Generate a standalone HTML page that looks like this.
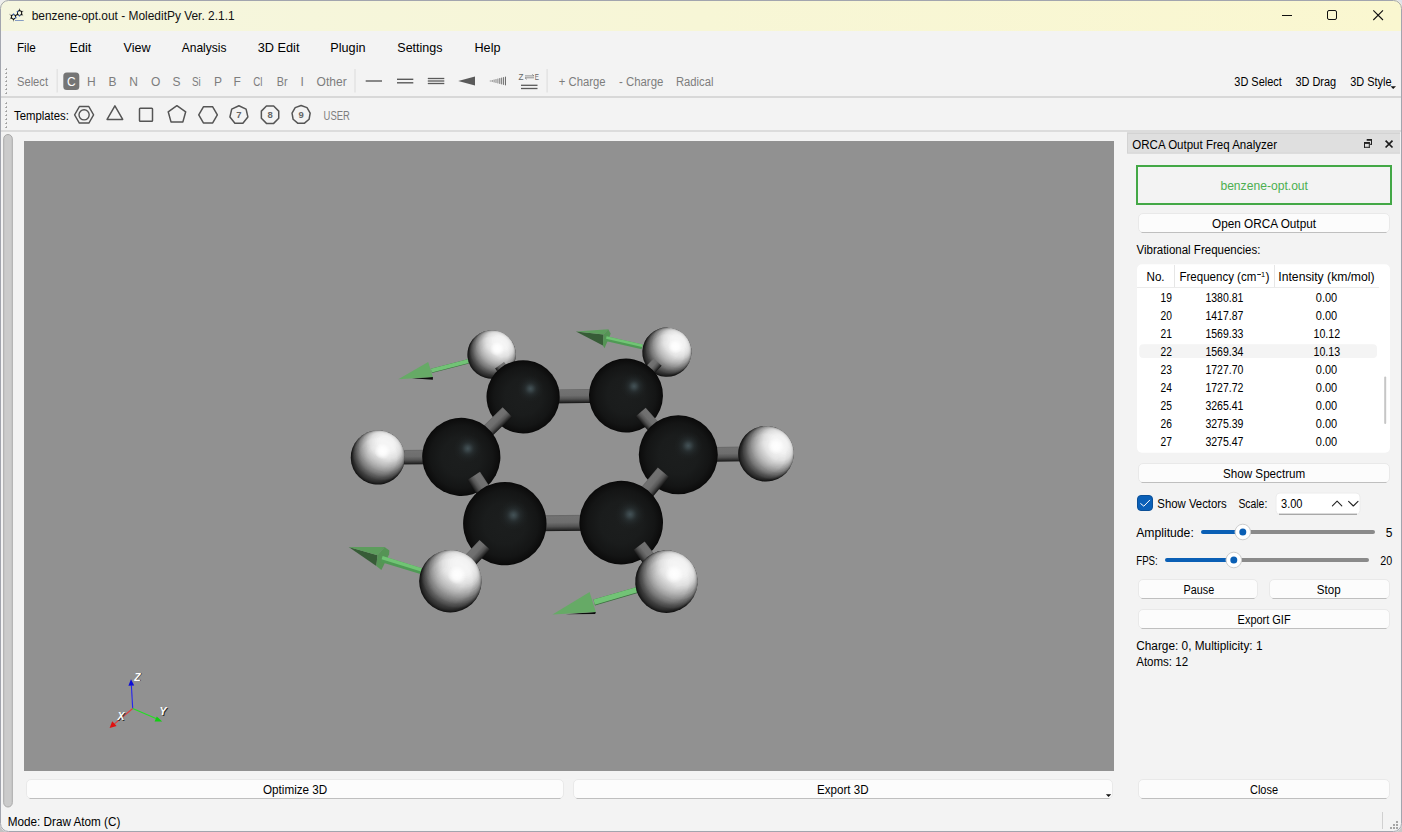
<!DOCTYPE html>
<html lang="en"><head><meta charset="utf-8"><title>benzene-opt.out - MoleditPy Ver. 2.1.1</title>
<style>html,body{margin:0;padding:0;background:#c9c9c9;overflow:hidden}svg{display:block}text{font-family:"Liberation Sans",sans-serif;white-space:pre}</style>
</head><body>
<svg width="1402" height="832" viewBox="0 0 1402 832">
<defs>
<linearGradient id="tb" x1="0" x2="1" y1="0" y2="0"><stop offset="0" stop-color="#f5f6df"/><stop offset="0.5" stop-color="#f7f6d6"/><stop offset="1" stop-color="#faf7d0"/></linearGradient>
<radialGradient id="gC" cx="0.57" cy="0.39" r="0.7"><stop offset="0" stop-color="#4d6168"/><stop offset="0.06" stop-color="#3f4e54"/><stop offset="0.15" stop-color="#2b3336"/><stop offset="0.3" stop-color="#212425"/><stop offset="0.6" stop-color="#1a1b1b"/><stop offset="0.85" stop-color="#131313"/><stop offset="1" stop-color="#0a0a0a"/></radialGradient>
<radialGradient id="gH" cx="0.59" cy="0.38" r="0.72"><stop offset="0" stop-color="#ffffff"/><stop offset="0.22" stop-color="#fdfdfd"/><stop offset="0.45" stop-color="#e2e2e2"/><stop offset="0.65" stop-color="#b4b4b4"/><stop offset="0.8" stop-color="#888888"/><stop offset="0.92" stop-color="#585858"/><stop offset="1" stop-color="#3a3a3a"/></radialGradient>
<radialGradient id="gH6" cx="0.65" cy="0.38" r="0.76"><stop offset="0" stop-color="#ffffff"/><stop offset="0.2" stop-color="#fdfdfd"/><stop offset="0.42" stop-color="#e2e2e2"/><stop offset="0.62" stop-color="#b4b4b4"/><stop offset="0.78" stop-color="#888888"/><stop offset="0.9" stop-color="#585858"/><stop offset="1" stop-color="#3a3a3a"/></radialGradient>
<clipPath id="win"><rect x="0" y="0" width="1402" height="832" rx="8"/></clipPath>
</defs>
<rect x="0" y="0" width="10" height="10" fill="#eeeeee" rx="0" />
<rect x="1392" y="0" width="10" height="10" fill="#dfe2ea" rx="0" />
<rect x="0" y="822" width="10" height="10" fill="#c2c2c2" rx="0" />
<rect x="1392" y="822" width="10" height="10" fill="#c8c8c8" rx="0" />
<g id="window" clip-path="url(#win)">
<rect x="0" y="0" width="1402" height="832" fill="#f3f3f3" rx="0" />
<g id="titlebar">
<rect x="0" y="0" width="1402" height="31" fill="url(#tb)" rx="0" />
<text x="31.70" y="20.00" font-size="12.3" fill="#111111" textLength="202.90" lengthAdjust="spacingAndGlyphs" >benzene-opt.out - MoleditPy Ver. 2.1.1</text>
<g id="appicon">
<path d="M11.55 15.57 L9.4 14.25 M11.4 17.95 L9.7 19.3 M13.5 19.3 V21.4 M19.5 10.4 V8.4 M21.6 11.6 L23.4 11.2 M21.6 14.4 L23.2 15.6" stroke="#8a8a80" stroke-width="0.8" fill="none"/>
<polygon points="11.55,15.57 13.53,14.38 15.5,15.57 15.65,17.7 13.5,19.3 11.4,17.95" fill="none" stroke="#1a1a1a" stroke-width="1"/>
<polygon points="17.5,11.6 19.5,10.4 21.6,11.6 21.6,14.4 19.5,15.6 17.5,14.4" fill="none" stroke="#1a1a1a" stroke-width="1"/>
<path d="M15.5 15.57 L17.5 14.4" stroke="#1a1a1a" stroke-width="1"/>
<circle cx="11.55" cy="15.57" r="0.85" fill="#111111"/>
<circle cx="13.53" cy="14.38" r="0.85" fill="#3560b8"/>
<circle cx="15.5" cy="15.57" r="0.85" fill="#111111"/>
<circle cx="15.65" cy="17.7" r="0.85" fill="#3560b8"/>
<circle cx="13.5" cy="19.3" r="0.85" fill="#111111"/>
<circle cx="11.4" cy="17.95" r="0.85" fill="#111111"/>
<circle cx="17.5" cy="11.6" r="0.85" fill="#3560b8"/>
<circle cx="19.5" cy="10.4" r="0.85" fill="#111111"/>
<circle cx="21.6" cy="11.6" r="0.85" fill="#111111"/>
<circle cx="21.6" cy="14.4" r="0.85" fill="#111111"/>
<circle cx="19.5" cy="15.6" r="0.85" fill="#3560b8"/>
<circle cx="17.5" cy="14.4" r="0.85" fill="#111111"/>
<path d="M15.2 20.5 H23.8" stroke="#5a78b8" stroke-width="0.9" stroke-dasharray="1.6 0.4"/>
</g>
<line x1="1282" y1="15.5" x2="1292" y2="15.5" stroke="#111" stroke-width="1" />
<rect x="1327.5" y="10.5" width="9" height="9" rx="1.5" fill="none" stroke="#111" stroke-width="1"/>
<path d="M1373.3 10.3 L1383 20 M1383 10.3 L1373.3 20" stroke="#111" stroke-width="1.1" fill="none"/>
</g>
<g id="menubar">
<text x="17.00" y="51.50" font-size="13" fill="#000" textLength="18.80" lengthAdjust="spacingAndGlyphs" >File</text>
<text x="69.50" y="51.50" font-size="13" fill="#000" textLength="21.80" lengthAdjust="spacingAndGlyphs" >Edit</text>
<text x="123.50" y="51.50" font-size="13" fill="#000" textLength="27.00" lengthAdjust="spacingAndGlyphs" >View</text>
<text x="181.70" y="51.50" font-size="13" fill="#000" textLength="44.80" lengthAdjust="spacingAndGlyphs" >Analysis</text>
<text x="257.70" y="51.50" font-size="13" fill="#000" textLength="41.80" lengthAdjust="spacingAndGlyphs" >3D Edit</text>
<text x="330.30" y="51.50" font-size="13" fill="#000" textLength="35.20" lengthAdjust="spacingAndGlyphs" >Plugin</text>
<text x="397.30" y="51.50" font-size="13" fill="#000" textLength="45.20" lengthAdjust="spacingAndGlyphs" >Settings</text>
<text x="474.50" y="51.50" font-size="13" fill="#000" textLength="26.00" lengthAdjust="spacingAndGlyphs" >Help</text>
</g>
<g id="toolbar-main">
<rect x="5" y="68" width="2" height="2" fill="#b4b4b4" rx="0" />
<rect x="5" y="68" width="1" height="1" fill="#fcfcfc" rx="0" />
<rect x="6" y="69" width="1" height="1" fill="#9c9c9c" rx="0" />
<rect x="5" y="72" width="2" height="2" fill="#b4b4b4" rx="0" />
<rect x="5" y="72" width="1" height="1" fill="#fcfcfc" rx="0" />
<rect x="6" y="73" width="1" height="1" fill="#9c9c9c" rx="0" />
<rect x="5" y="76" width="2" height="2" fill="#b4b4b4" rx="0" />
<rect x="5" y="76" width="1" height="1" fill="#fcfcfc" rx="0" />
<rect x="6" y="77" width="1" height="1" fill="#9c9c9c" rx="0" />
<rect x="5" y="80" width="2" height="2" fill="#b4b4b4" rx="0" />
<rect x="5" y="80" width="1" height="1" fill="#fcfcfc" rx="0" />
<rect x="6" y="81" width="1" height="1" fill="#9c9c9c" rx="0" />
<rect x="5" y="84" width="2" height="2" fill="#b4b4b4" rx="0" />
<rect x="5" y="84" width="1" height="1" fill="#fcfcfc" rx="0" />
<rect x="6" y="85" width="1" height="1" fill="#9c9c9c" rx="0" />
<rect x="5" y="88" width="2" height="2" fill="#b4b4b4" rx="0" />
<rect x="5" y="88" width="1" height="1" fill="#fcfcfc" rx="0" />
<rect x="6" y="89" width="1" height="1" fill="#9c9c9c" rx="0" />
<rect x="5" y="92" width="2" height="2" fill="#b4b4b4" rx="0" />
<rect x="5" y="92" width="1" height="1" fill="#fcfcfc" rx="0" />
<rect x="6" y="93" width="1" height="1" fill="#9c9c9c" rx="0" />
<text x="17.00" y="85.70" font-size="12" fill="#7d7d7d" textLength="31.00" lengthAdjust="spacingAndGlyphs" >Select</text>
<line x1="57.2" y1="69" x2="57.2" y2="92.5" stroke="#e3e3e3" stroke-width="1.5" />
<rect x="63.3" y="72.5" width="16" height="17.5" fill="#757575" rx="3.5" />
<text x="71.35" y="85.70" font-size="12" fill="#ffffff" text-anchor="middle" >C</text>
<text x="91.30" y="85.70" font-size="12" fill="#7d7d7d" text-anchor="middle" >H</text>
<text x="112.55" y="85.70" font-size="12" fill="#7d7d7d" text-anchor="middle" >B</text>
<text x="133.65" y="85.70" font-size="12" fill="#7d7d7d" text-anchor="middle" >N</text>
<text x="155.75" y="85.70" font-size="12" fill="#7d7d7d" text-anchor="middle" >O</text>
<text x="176.40" y="85.70" font-size="12" fill="#7d7d7d" text-anchor="middle" >S</text>
<text x="192.00" y="85.70" font-size="12" fill="#7d7d7d" textLength="8.80" lengthAdjust="spacingAndGlyphs" >Si</text>
<text x="217.90" y="85.70" font-size="12" fill="#7d7d7d" text-anchor="middle" >P</text>
<text x="237.05" y="85.70" font-size="12" fill="#7d7d7d" text-anchor="middle" >F</text>
<text x="253.20" y="85.70" font-size="12" fill="#7d7d7d" textLength="9.30" lengthAdjust="spacingAndGlyphs" >Cl</text>
<text x="276.70" y="85.70" font-size="12" fill="#7d7d7d" textLength="10.80" lengthAdjust="spacingAndGlyphs" >Br</text>
<text x="302.15" y="85.70" font-size="12" fill="#7d7d7d" text-anchor="middle" >I</text>
<text x="316.60" y="85.70" font-size="12" fill="#7d7d7d" textLength="30.10" lengthAdjust="spacingAndGlyphs" >Other</text>
<line x1="355" y1="69" x2="355" y2="92.5" stroke="#e3e3e3" stroke-width="1.5" />
<line x1="365.7" y1="81" x2="382" y2="81" stroke="#5a5a5a" stroke-width="1.4" />
<line x1="397" y1="79.3" x2="413.3" y2="79.3" stroke="#5a5a5a" stroke-width="1.4" />
<line x1="397" y1="82.8" x2="413.3" y2="82.8" stroke="#5a5a5a" stroke-width="1.4" />
<line x1="427.8" y1="78.5" x2="444.3" y2="78.5" stroke="#5a5a5a" stroke-width="1.3" />
<line x1="427.8" y1="81" x2="444.3" y2="81" stroke="#5a5a5a" stroke-width="1.3" />
<line x1="427.8" y1="83.5" x2="444.3" y2="83.5" stroke="#5a5a5a" stroke-width="1.3" />
<polygon points="458.2,81 475,76.5 475,85.5" fill="#5a5a5a"/>
<line x1="490.30" y1="80.50" x2="490.30" y2="81.50" stroke="#848484" stroke-width="1" />
<line x1="492.20" y1="80.02" x2="492.20" y2="81.98" stroke="#848484" stroke-width="1" />
<line x1="494.10" y1="79.54" x2="494.10" y2="82.46" stroke="#848484" stroke-width="1" />
<line x1="496.00" y1="79.06" x2="496.00" y2="82.94" stroke="#848484" stroke-width="1" />
<line x1="497.90" y1="78.58" x2="497.90" y2="83.42" stroke="#848484" stroke-width="1" />
<line x1="499.80" y1="78.10" x2="499.80" y2="83.90" stroke="#6e6e6e" stroke-width="1" />
<line x1="501.70" y1="77.62" x2="501.70" y2="84.38" stroke="#6e6e6e" stroke-width="1" />
<line x1="503.60" y1="77.14" x2="503.60" y2="84.86" stroke="#6e6e6e" stroke-width="1" />
<line x1="505.50" y1="76.66" x2="505.50" y2="85.34" stroke="#6e6e6e" stroke-width="1" />
<text x="518.5" y="79.9" font-size="9.5" fill="#666666" textLength="5" lengthAdjust="spacingAndGlyphs">Z</text>
<text x="534.8" y="79.9" font-size="9.5" fill="#666666" textLength="4.2" lengthAdjust="spacingAndGlyphs">E</text>
<path d="M525 75.9 H534 M532.2 74.4 L534 75.9 M525 77.8 H534 M526.8 79.3 L525 77.8" stroke="#777777" stroke-width="0.8" fill="none"/>
<line x1="521" y1="85.3" x2="537.5" y2="85.3" stroke="#5a5a5a" stroke-width="1.3" />
<line x1="521" y1="88.5" x2="537.5" y2="88.5" stroke="#5a5a5a" stroke-width="1.3" />
<line x1="547.1" y1="69" x2="547.1" y2="92.5" stroke="#e3e3e3" stroke-width="1.5" />
<text x="558.80" y="85.70" font-size="12" fill="#7d7d7d" textLength="46.70" lengthAdjust="spacingAndGlyphs" >+ Charge</text>
<text x="619.00" y="85.70" font-size="12" fill="#7d7d7d" textLength="44.30" lengthAdjust="spacingAndGlyphs" >- Charge</text>
<text x="676.00" y="85.70" font-size="12" fill="#7d7d7d" textLength="37.50" lengthAdjust="spacingAndGlyphs" >Radical</text>
<text x="1234.30" y="85.70" font-size="12" fill="#000" textLength="47.50" lengthAdjust="spacingAndGlyphs" >3D Select</text>
<text x="1295.40" y="85.70" font-size="12" fill="#000" textLength="40.80" lengthAdjust="spacingAndGlyphs" >3D Drag</text>
<text x="1350.30" y="85.70" font-size="12" fill="#000" textLength="41.30" lengthAdjust="spacingAndGlyphs" >3D Style</text>
<polygon points="1390.5,86.3 1396,86.3 1393.2,88.9" fill="#111"/>
<rect x="0" y="96" width="1402" height="2" fill="#d8d8d8" rx="0" />
</g>
<g id="toolbar-templates">
<rect x="5" y="102" width="2" height="2" fill="#b4b4b4" rx="0" />
<rect x="5" y="102" width="1" height="1" fill="#fcfcfc" rx="0" />
<rect x="6" y="103" width="1" height="1" fill="#9c9c9c" rx="0" />
<rect x="5" y="106" width="2" height="2" fill="#b4b4b4" rx="0" />
<rect x="5" y="106" width="1" height="1" fill="#fcfcfc" rx="0" />
<rect x="6" y="107" width="1" height="1" fill="#9c9c9c" rx="0" />
<rect x="5" y="110" width="2" height="2" fill="#b4b4b4" rx="0" />
<rect x="5" y="110" width="1" height="1" fill="#fcfcfc" rx="0" />
<rect x="6" y="111" width="1" height="1" fill="#9c9c9c" rx="0" />
<rect x="5" y="114" width="2" height="2" fill="#b4b4b4" rx="0" />
<rect x="5" y="114" width="1" height="1" fill="#fcfcfc" rx="0" />
<rect x="6" y="115" width="1" height="1" fill="#9c9c9c" rx="0" />
<rect x="5" y="118" width="2" height="2" fill="#b4b4b4" rx="0" />
<rect x="5" y="118" width="1" height="1" fill="#fcfcfc" rx="0" />
<rect x="6" y="119" width="1" height="1" fill="#9c9c9c" rx="0" />
<rect x="5" y="122" width="2" height="2" fill="#b4b4b4" rx="0" />
<rect x="5" y="122" width="1" height="1" fill="#fcfcfc" rx="0" />
<rect x="6" y="123" width="1" height="1" fill="#9c9c9c" rx="0" />
<rect x="5" y="126" width="2" height="2" fill="#b4b4b4" rx="0" />
<rect x="5" y="126" width="1" height="1" fill="#fcfcfc" rx="0" />
<rect x="6" y="127" width="1" height="1" fill="#9c9c9c" rx="0" />
<text x="14.00" y="119.80" font-size="12" fill="#000" textLength="54.80" lengthAdjust="spacingAndGlyphs" >Templates:</text>
<polygon points="93.60,114.80 88.85,123.03 79.35,123.03 74.60,114.80 79.35,106.57 88.85,106.57" fill="none" stroke="#555555" stroke-width="1.4" stroke-linejoin="round"/>
<circle cx="84.1" cy="114.8" r="5.1" fill="none" stroke="#555555" stroke-width="1.4"/>
<polygon points="114.9,105.9 122.7,119.4 107.1,119.4" fill="none" stroke="#555555" stroke-width="1.5" stroke-linejoin="round"/>
<rect x="139.5" y="108.3" width="13" height="13" rx="0.8" fill="none" stroke="#555555" stroke-width="1.5"/>
<polygon points="176.9,105.7 185.7,111.8 182.9,121.9 171,121.9 168.2,111.8" fill="none" stroke="#555555" stroke-width="1.5" stroke-linejoin="round"/>
<polygon points="217.35,114.90 212.70,122.95 203.40,122.95 198.75,114.90 203.40,106.85 212.70,106.85" fill="none" stroke="#555555" stroke-width="1.5" stroke-linejoin="round"/>
<polygon points="238.90,105.70 246.09,109.16 247.87,116.95 242.89,123.19 234.91,123.19 229.93,116.95 231.71,109.16" fill="none" stroke="#555555" stroke-width="1.5" stroke-linejoin="round"/>
<polygon points="278.73,118.30 273.65,123.38 266.45,123.38 261.37,118.30 261.37,111.10 266.45,106.02 273.65,106.02 278.73,111.10" fill="none" stroke="#555555" stroke-width="1.5" stroke-linejoin="round"/>
<polygon points="301.10,105.50 307.01,107.65 310.16,113.10 309.07,119.30 304.25,123.35 297.95,123.35 293.13,119.30 292.04,113.10 295.19,107.65" fill="none" stroke="#555555" stroke-width="1.5" stroke-linejoin="round"/>
<text x="238.90" y="118.20" font-size="9.5" fill="#666" text-anchor="middle" font-weight="bold">7</text>
<text x="270.05" y="118.20" font-size="9.5" fill="#666" text-anchor="middle" font-weight="bold">8</text>
<text x="301.10" y="118.20" font-size="9.5" fill="#666" text-anchor="middle" font-weight="bold">9</text>
<text x="323.60" y="119.60" font-size="12" fill="#7d7d7d" textLength="26.20" lengthAdjust="spacingAndGlyphs" >USER</text>
<rect x="0" y="130" width="1402" height="2" fill="#dcdcdc" rx="0" />
</g>
<rect x="3.7" y="134.5" width="8.6" height="672.5" rx="4.3" fill="#cbcbcb" stroke="#a9a9a9" stroke-width="1"/>
<g id="viewport">
<rect x="24" y="141" width="1090" height="630" fill="#919191" rx="0" />
</g>
<rect x="26.5" y="779.5" width="537" height="19" rx="4.5" fill="#fcfcfc" stroke="#e9e9e9" stroke-width="1"/>
<path d="M29.5 798.5 H560.5" stroke="#bfbfbf" stroke-width="1" fill="none"/>
<text x="263.00" y="793.80" font-size="12" fill="#000" textLength="64.30" lengthAdjust="spacingAndGlyphs" >Optimize 3D</text>
<rect x="573.5" y="779.5" width="539" height="19" rx="4.5" fill="#fcfcfc" stroke="#e9e9e9" stroke-width="1"/>
<path d="M576.5 798.5 H1109.5" stroke="#bfbfbf" stroke-width="1" fill="none"/>
<text x="817.00" y="793.80" font-size="12" fill="#000" textLength="51.50" lengthAdjust="spacingAndGlyphs" >Export 3D</text>
<polygon points="1105.9,794.2 1111.2,794.2 1108.55,797" fill="#111"/>
<text x="7.70" y="825.60" font-size="12" fill="#000" textLength="112.70" lengthAdjust="spacingAndGlyphs" >Mode: Draw Atom (C)</text>
<line x1="1382.5" y1="812" x2="1382.5" y2="829" stroke="#d0d0d0" stroke-width="1" />
<rect x="1396" y="821" width="2" height="2" fill="#a6a6a6" rx="0" />
<rect x="1393" y="824" width="2" height="2" fill="#a6a6a6" rx="0" />
<rect x="1396" y="824" width="2" height="2" fill="#a6a6a6" rx="0" />
<rect x="1390" y="827" width="2" height="2" fill="#a6a6a6" rx="0" />
<rect x="1393" y="827" width="2" height="2" fill="#a6a6a6" rx="0" />
<rect x="1396" y="827" width="2" height="2" fill="#a6a6a6" rx="0" />
<g id="dock">
<rect x="1127" y="132" width="273" height="1" fill="#dcdcdc" rx="0" />
<rect x="1127" y="133" width="273" height="20.7" fill="#d3d3d3" rx="0" />
<rect x="1128" y="134" width="272" height="18.7" fill="#dfdfdf" rx="0" />
<text x="1132.30" y="148.90" font-size="12" fill="#000" textLength="144.70" lengthAdjust="spacingAndGlyphs" >ORCA Output Freq Analyzer</text>
<g fill="#222222"><rect x="1366.7" y="139" width="5.3" height="1.8"/><rect x="1371" y="139" width="1" height="5.8"/><rect x="1369.8" y="143.8" width="2.2" height="1"/><rect x="1364" y="142" width="5.8" height="1.9"/><rect x="1364" y="142" width="1" height="5.8"/><rect x="1368.8" y="142" width="1" height="5.8"/><rect x="1364" y="146.8" width="5.8" height="1"/></g>
<path d="M1385.6 140.6 L1392.5 147.5 M1392.5 140.6 L1385.6 147.5" stroke="#1c1c1c" stroke-width="1.7" fill="none"/>
<rect x="1137" y="166" width="254" height="38" fill="#f3f3f3" stroke="#43a846" stroke-width="2"/>
<text x="1220.40" y="190.00" font-size="12" fill="#4caf50" textLength="87.60" lengthAdjust="spacingAndGlyphs" >benzene-opt.out</text>
<rect x="1138.5" y="213.5" width="251" height="19" rx="4.5" fill="#fcfcfc" stroke="#e9e9e9" stroke-width="1"/>
<path d="M1141.5 232.5 H1386.5" stroke="#bfbfbf" stroke-width="1" fill="none"/>
<text x="1212.00" y="228.00" font-size="12" fill="#000" textLength="104.00" lengthAdjust="spacingAndGlyphs" >Open ORCA Output</text>
<text x="1136.50" y="254.00" font-size="12" fill="#000" textLength="123.90" lengthAdjust="spacingAndGlyphs" >Vibrational Frequencies:</text>
<rect x="1137" y="264.3" width="253" height="188.5" fill="#ffffff" rx="5" />
<text x="1146.50" y="281.00" font-size="12" fill="#000" textLength="18.10" lengthAdjust="spacingAndGlyphs" >No.</text>
<text x="1179.50" y="281.00" font-size="12" fill="#000" textLength="76.80" lengthAdjust="spacingAndGlyphs" >Frequency (cm</text>
<line x1="1257.2" y1="274.5" x2="1260.9" y2="274.5" stroke="#1a1a1a" stroke-width="1"/>
<text x="1263.1" y="276.9" font-size="7.4" fill="#000" text-anchor="middle">1</text>
<text x="1267.40" y="281.00" font-size="12" fill="#000" text-anchor="middle" >)</text>
<text x="1278.30" y="281.00" font-size="12" fill="#000" textLength="96.20" lengthAdjust="spacingAndGlyphs" >Intensity (km/mol)</text>
<line x1="1174.5" y1="265" x2="1174.5" y2="287" stroke="#e6e6e6" stroke-width="1"/>
<line x1="1274.5" y1="265" x2="1274.5" y2="287" stroke="#e6e6e6" stroke-width="1"/>
<line x1="1137" y1="287.5" x2="1379" y2="287.5" stroke="#ebebeb" stroke-width="1"/>
<rect x="1139.3" y="344.2" width="237.7" height="13.7" fill="#f4f4f4" rx="4" />
<text x="1160.60" y="301.80" font-size="12" fill="#000" textLength="11.40" lengthAdjust="spacingAndGlyphs" >19</text>
<text x="1205.40" y="301.80" font-size="12" fill="#000" textLength="38.00" lengthAdjust="spacingAndGlyphs" >1380.81</text>
<text x="1315.80" y="301.80" font-size="12" fill="#000" textLength="21.40" lengthAdjust="spacingAndGlyphs" >0.00</text>
<text x="1160.60" y="319.80" font-size="12" fill="#000" textLength="11.40" lengthAdjust="spacingAndGlyphs" >20</text>
<text x="1205.40" y="319.80" font-size="12" fill="#000" textLength="38.00" lengthAdjust="spacingAndGlyphs" >1417.87</text>
<text x="1315.80" y="319.80" font-size="12" fill="#000" textLength="21.40" lengthAdjust="spacingAndGlyphs" >0.00</text>
<text x="1160.60" y="337.80" font-size="12" fill="#000" textLength="11.40" lengthAdjust="spacingAndGlyphs" >21</text>
<text x="1205.40" y="337.80" font-size="12" fill="#000" textLength="38.00" lengthAdjust="spacingAndGlyphs" >1569.33</text>
<text x="1313.50" y="337.80" font-size="12" fill="#000" textLength="26.70" lengthAdjust="spacingAndGlyphs" >10.12</text>
<text x="1160.60" y="355.80" font-size="12" fill="#000" textLength="11.40" lengthAdjust="spacingAndGlyphs" >22</text>
<text x="1205.40" y="355.80" font-size="12" fill="#000" textLength="38.00" lengthAdjust="spacingAndGlyphs" >1569.34</text>
<text x="1313.50" y="355.80" font-size="12" fill="#000" textLength="26.70" lengthAdjust="spacingAndGlyphs" >10.13</text>
<text x="1160.60" y="373.80" font-size="12" fill="#000" textLength="11.40" lengthAdjust="spacingAndGlyphs" >23</text>
<text x="1205.40" y="373.80" font-size="12" fill="#000" textLength="38.00" lengthAdjust="spacingAndGlyphs" >1727.70</text>
<text x="1315.80" y="373.80" font-size="12" fill="#000" textLength="21.40" lengthAdjust="spacingAndGlyphs" >0.00</text>
<text x="1160.60" y="391.80" font-size="12" fill="#000" textLength="11.40" lengthAdjust="spacingAndGlyphs" >24</text>
<text x="1205.40" y="391.80" font-size="12" fill="#000" textLength="38.00" lengthAdjust="spacingAndGlyphs" >1727.72</text>
<text x="1315.80" y="391.80" font-size="12" fill="#000" textLength="21.40" lengthAdjust="spacingAndGlyphs" >0.00</text>
<text x="1160.60" y="409.80" font-size="12" fill="#000" textLength="11.40" lengthAdjust="spacingAndGlyphs" >25</text>
<text x="1205.40" y="409.80" font-size="12" fill="#000" textLength="38.00" lengthAdjust="spacingAndGlyphs" >3265.41</text>
<text x="1315.80" y="409.80" font-size="12" fill="#000" textLength="21.40" lengthAdjust="spacingAndGlyphs" >0.00</text>
<text x="1160.60" y="427.80" font-size="12" fill="#000" textLength="11.40" lengthAdjust="spacingAndGlyphs" >26</text>
<text x="1205.40" y="427.80" font-size="12" fill="#000" textLength="38.00" lengthAdjust="spacingAndGlyphs" >3275.39</text>
<text x="1315.80" y="427.80" font-size="12" fill="#000" textLength="21.40" lengthAdjust="spacingAndGlyphs" >0.00</text>
<text x="1160.60" y="445.80" font-size="12" fill="#000" textLength="11.40" lengthAdjust="spacingAndGlyphs" >27</text>
<text x="1205.40" y="445.80" font-size="12" fill="#000" textLength="38.00" lengthAdjust="spacingAndGlyphs" >3275.47</text>
<text x="1315.80" y="445.80" font-size="12" fill="#000" textLength="21.40" lengthAdjust="spacingAndGlyphs" >0.00</text>
<rect x="1384.2" y="376.5" width="2" height="47.5" fill="#c6c6c6" rx="1" />
<rect x="1138.5" y="463.5" width="251" height="19" rx="4.5" fill="#fcfcfc" stroke="#e9e9e9" stroke-width="1"/>
<path d="M1141.5 482.5 H1386.5" stroke="#bfbfbf" stroke-width="1" fill="none"/>
<text x="1223.00" y="478.00" font-size="12" fill="#000" textLength="82.20" lengthAdjust="spacingAndGlyphs" >Show Spectrum</text>
<rect x="1137.5" y="495.5" width="15" height="15" rx="3.5" fill="#0a60b8" stroke="#0b4f97" stroke-width="1"/>
<path d="M1140.7 503.6 L1143.8 506.2 L1149.7 500.2" stroke="#ffffff" stroke-width="1" fill="none" stroke-linecap="round" stroke-linejoin="round"/>
<text x="1157.30" y="508.00" font-size="12" fill="#000" textLength="69.50" lengthAdjust="spacingAndGlyphs" >Show Vectors</text>
<text x="1238.40" y="508.00" font-size="12" fill="#000" textLength="28.90" lengthAdjust="spacingAndGlyphs" >Scale:</text>
<rect x="1276" y="493" width="84" height="21.5" rx="4" fill="#ffffff" stroke="#ececec" stroke-width="1"/>
<line x1="1279" y1="514.2" x2="1357" y2="514.2" stroke="#8a8a8a" stroke-width="1"/>
<text x="1281.00" y="508.00" font-size="12" fill="#000" textLength="21.50" lengthAdjust="spacingAndGlyphs" >3.00</text>
<path d="M1332.4 505.8 L1337.1 501.2 L1341.8 505.8 M1348.6 501.4 L1353.3 506 L1358 501.4" stroke="#222" stroke-width="1.1" fill="none" stroke-linecap="round" stroke-linejoin="round"/>
<text x="1136.20" y="537.00" font-size="12" fill="#000" textLength="57.60" lengthAdjust="spacingAndGlyphs" >Amplitude:</text>
<line x1="1203" y1="532" x2="1242" y2="532" stroke="#0a5fb5" stroke-width="4" stroke-linecap="round"/>
<line x1="1250" y1="532" x2="1373" y2="532" stroke="#8a8a8a" stroke-width="4" stroke-linecap="round"/>
<circle cx="1242.8" cy="532" r="7.8" fill="#ffffff" stroke="#cdcdcd" stroke-width="1"/><circle cx="1242.8" cy="532" r="3.5" fill="#0a5fb5"/>
<text x="1389.05" y="537.00" font-size="12" fill="#000" text-anchor="middle" >5</text>
<text x="1136.20" y="565.00" font-size="12" fill="#000" textLength="21.60" lengthAdjust="spacingAndGlyphs" >FPS:</text>
<line x1="1167" y1="560" x2="1233" y2="560" stroke="#0a5fb5" stroke-width="4" stroke-linecap="round"/>
<line x1="1241" y1="560" x2="1367" y2="560" stroke="#8a8a8a" stroke-width="4" stroke-linecap="round"/>
<circle cx="1233.8" cy="560" r="7.8" fill="#ffffff" stroke="#cdcdcd" stroke-width="1"/><circle cx="1233.8" cy="560" r="3.5" fill="#0a5fb5"/>
<text x="1380.30" y="565.00" font-size="12" fill="#000" textLength="11.90" lengthAdjust="spacingAndGlyphs" >20</text>
<rect x="1138.5" y="579.5" width="119" height="19" rx="4.5" fill="#fcfcfc" stroke="#e9e9e9" stroke-width="1"/>
<path d="M1141.5 598.5 H1254.5" stroke="#bfbfbf" stroke-width="1" fill="none"/>
<text x="1183.60" y="593.90" font-size="12" fill="#000" textLength="30.60" lengthAdjust="spacingAndGlyphs" >Pause</text>
<rect x="1269.5" y="579.5" width="120" height="19" rx="4.5" fill="#fcfcfc" stroke="#e9e9e9" stroke-width="1"/>
<path d="M1272.5 598.5 H1386.5" stroke="#bfbfbf" stroke-width="1" fill="none"/>
<text x="1316.80" y="593.90" font-size="12" fill="#000" textLength="23.80" lengthAdjust="spacingAndGlyphs" >Stop</text>
<rect x="1138.5" y="609.5" width="251" height="19" rx="4.5" fill="#fcfcfc" stroke="#e9e9e9" stroke-width="1"/>
<path d="M1141.5 628.5 H1386.5" stroke="#bfbfbf" stroke-width="1" fill="none"/>
<text x="1237.60" y="623.90" font-size="12" fill="#000" textLength="53.00" lengthAdjust="spacingAndGlyphs" >Export GIF</text>
<text x="1136.20" y="649.90" font-size="12" fill="#000" textLength="126.30" lengthAdjust="spacingAndGlyphs" >Charge: 0, Multiplicity: 1</text>
<text x="1136.20" y="666.00" font-size="12" fill="#000" textLength="51.90" lengthAdjust="spacingAndGlyphs" >Atoms: 12</text>
<rect x="1138.5" y="779.5" width="251" height="19" rx="4.5" fill="#fcfcfc" stroke="#e9e9e9" stroke-width="1"/>
<path d="M1141.5 798.5 H1386.5" stroke="#bfbfbf" stroke-width="1" fill="none"/>
<text x="1250.00" y="793.80" font-size="12" fill="#000" textLength="28.00" lengthAdjust="spacingAndGlyphs" >Close</text>
</g>
<defs><linearGradient id="b1" gradientUnits="userSpaceOnUse" x1="515.7" y1="377.7" x2="506.9" y2="384.3"><stop offset="0" stop-color="#666666"/><stop offset="0.1" stop-color="#727272"/><stop offset="0.45" stop-color="#6e6e6e"/><stop offset="0.7" stop-color="#545454"/><stop offset="0.88" stop-color="#303030"/><stop offset="1" stop-color="#141414"/></linearGradient>
<linearGradient id="b2" gradientUnits="userSpaceOnUse" x1="637.8" y1="375.0" x2="645.8" y2="382.5"><stop offset="0" stop-color="#666666"/><stop offset="0.1" stop-color="#727272"/><stop offset="0.45" stop-color="#6e6e6e"/><stop offset="0.7" stop-color="#545454"/><stop offset="0.88" stop-color="#303030"/><stop offset="1" stop-color="#141414"/></linearGradient>
<linearGradient id="b3" gradientUnits="userSpaceOnUse" x1="587.3" y1="389.0" x2="587.4" y2="403.0"><stop offset="0" stop-color="#666666"/><stop offset="0.1" stop-color="#727272"/><stop offset="0.45" stop-color="#6e6e6e"/><stop offset="0.7" stop-color="#545454"/><stop offset="0.88" stop-color="#303030"/><stop offset="1" stop-color="#141414"/></linearGradient>
<linearGradient id="b4" gradientUnits="userSpaceOnUse" x1="479.6" y1="429.6" x2="489.0" y2="439.3"><stop offset="0" stop-color="#666666"/><stop offset="0.1" stop-color="#727272"/><stop offset="0.45" stop-color="#6e6e6e"/><stop offset="0.7" stop-color="#545454"/><stop offset="0.88" stop-color="#303030"/><stop offset="1" stop-color="#141414"/></linearGradient>
<linearGradient id="b5" gradientUnits="userSpaceOnUse" x1="664.6" y1="429.0" x2="654.4" y2="437.9"><stop offset="0" stop-color="#666666"/><stop offset="0.1" stop-color="#727272"/><stop offset="0.45" stop-color="#6e6e6e"/><stop offset="0.7" stop-color="#545454"/><stop offset="0.88" stop-color="#303030"/><stop offset="1" stop-color="#141414"/></linearGradient>
<linearGradient id="b6" gradientUnits="userSpaceOnUse" x1="429.0" y1="449.8" x2="429.1" y2="464.3"><stop offset="0" stop-color="#666666"/><stop offset="0.1" stop-color="#727272"/><stop offset="0.45" stop-color="#6e6e6e"/><stop offset="0.7" stop-color="#545454"/><stop offset="0.88" stop-color="#303030"/><stop offset="1" stop-color="#141414"/></linearGradient>
<linearGradient id="b7" gradientUnits="userSpaceOnUse" x1="712.3" y1="447.0" x2="712.5" y2="461.8"><stop offset="0" stop-color="#666666"/><stop offset="0.1" stop-color="#727272"/><stop offset="0.45" stop-color="#6e6e6e"/><stop offset="0.7" stop-color="#545454"/><stop offset="0.88" stop-color="#303030"/><stop offset="1" stop-color="#141414"/></linearGradient>
<linearGradient id="b8" gradientUnits="userSpaceOnUse" x1="495.5" y1="495.6" x2="483.0" y2="503.8"><stop offset="0" stop-color="#666666"/><stop offset="0.1" stop-color="#727272"/><stop offset="0.45" stop-color="#6e6e6e"/><stop offset="0.7" stop-color="#545454"/><stop offset="0.88" stop-color="#303030"/><stop offset="1" stop-color="#141414"/></linearGradient>
<linearGradient id="b9" gradientUnits="userSpaceOnUse" x1="636.6" y1="492.6" x2="648.1" y2="502.3"><stop offset="0" stop-color="#666666"/><stop offset="0.1" stop-color="#727272"/><stop offset="0.45" stop-color="#6e6e6e"/><stop offset="0.7" stop-color="#545454"/><stop offset="0.88" stop-color="#303030"/><stop offset="1" stop-color="#141414"/></linearGradient>
<linearGradient id="b10" gradientUnits="userSpaceOnUse" x1="577.5" y1="515.0" x2="577.7" y2="531.0"><stop offset="0" stop-color="#666666"/><stop offset="0.1" stop-color="#727272"/><stop offset="0.45" stop-color="#6e6e6e"/><stop offset="0.7" stop-color="#545454"/><stop offset="0.88" stop-color="#303030"/><stop offset="1" stop-color="#141414"/></linearGradient>
<linearGradient id="b11" gradientUnits="userSpaceOnUse" x1="462.3" y1="558.1" x2="472.9" y2="568.0"><stop offset="0" stop-color="#666666"/><stop offset="0.1" stop-color="#727272"/><stop offset="0.45" stop-color="#6e6e6e"/><stop offset="0.7" stop-color="#545454"/><stop offset="0.88" stop-color="#303030"/><stop offset="1" stop-color="#141414"/></linearGradient>
<linearGradient id="b12" gradientUnits="userSpaceOnUse" x1="658.4" y1="559.4" x2="646.9" y2="568.2"><stop offset="0" stop-color="#666666"/><stop offset="0.1" stop-color="#727272"/><stop offset="0.45" stop-color="#6e6e6e"/><stop offset="0.7" stop-color="#545454"/><stop offset="0.88" stop-color="#303030"/><stop offset="1" stop-color="#141414"/></linearGradient><radialGradient id="sHb" gradientUnits="userSpaceOnUse" cx="0" cy="0" r="1"><stop offset="0.000" stop-color="#737373"/><stop offset="0.200" stop-color="#707070"/><stop offset="0.400" stop-color="#676767"/><stop offset="0.550" stop-color="#5b5b5b"/><stop offset="0.700" stop-color="#4b4b4b"/><stop offset="0.800" stop-color="#3d3d3d"/><stop offset="0.880" stop-color="#2f2f2f"/><stop offset="0.940" stop-color="#212121"/><stop offset="0.980" stop-color="#151515"/><stop offset="1.000" stop-color="#0a0a0a"/></radialGradient>
<radialGradient id="sHs" gradientUnits="userSpaceOnUse" cx="0" cy="0" r="1"><stop offset="0.000" stop-color="#ffffff" stop-opacity="1"/><stop offset="0.450" stop-color="#ffffff" stop-opacity="0.8"/><stop offset="1.000" stop-color="#ffffff" stop-opacity="0"/></radialGradient>
<circle id="sHp" r="1" fill="url(#sHs)"/>
<g id="sH"><circle r="1" fill="url(#sHb)"/><g fill="#ffffff">
<path d="M-0.7852 0A0.7502 0.9986 0 1 1 0.7152 0A0.7502 0.9986 0 1 1 -0.7852 0ZM-0.0803 -0.9968A1 1 0 1 1 -0.0803 0.9968Z" fill-opacity="0.0149"/>
<path d="M-0.7682 0A0.7510 0.9997 0 1 1 0.7338 0A0.7510 0.9997 0 1 1 -0.7682 0ZM-0.0395 -0.9992A1 1 0 1 1 -0.0395 0.9992Z" fill-opacity="0.0151"/>
<path d="M-0.7507 0A0.7513 1.0000 0 1 1 0.7519 0A0.7513 1.0000 0 1 1 -0.7507 0ZM0.0014 -1.0000A1 1 0 0 1 0.0014 1.0000Z" fill-opacity="0.0154"/>
<path d="M-0.7326 0A0.7510 0.9996 0 1 1 0.7694 0A0.7510 0.9996 0 1 1 -0.7326 0ZM0.0423 -0.9991A1 1 0 0 1 0.0423 0.9991Z" fill-opacity="0.0156"/>
<path d="M-0.7139 0A0.7501 0.9985 0 1 1 0.7864 0A0.7501 0.9985 0 1 1 -0.7139 0ZM0.0831 -0.9965A1 1 0 0 1 0.0831 0.9965Z" fill-opacity="0.0159"/>
<path d="M-0.6947 0A0.7487 0.9966 0 1 1 0.8028 0A0.7487 0.9966 0 1 1 -0.6947 0ZM0.1240 -0.9923A1 1 0 0 1 0.1240 0.9923Z" fill-opacity="0.0161"/>
<path d="M-0.6750 0A0.7468 0.9941 0 1 1 0.8186 0A0.7468 0.9941 0 1 1 -0.6750 0ZM0.1649 -0.9863A1 1 0 0 1 0.1649 0.9863Z" fill-opacity="0.0164"/>
<path d="M-0.6547 0A0.7443 0.9907 0 1 1 0.8339 0A0.7443 0.9907 0 1 1 -0.6547 0ZM0.2058 -0.9786A1 1 0 0 1 0.2058 0.9786Z" fill-opacity="0.0167"/>
<path d="M-0.6338 0A0.7412 0.9867 0 1 1 0.8487 0A0.7412 0.9867 0 1 1 -0.6338 0ZM0.2466 -0.9691A1 1 0 0 1 0.2466 0.9691Z" fill-opacity="0.0262"/>
<path d="M-0.6124 0A0.7376 0.9818 0 1 1 0.8629 0A0.7376 0.9818 0 1 1 -0.6124 0ZM0.2875 -0.9578A1 1 0 0 1 0.2875 0.9578Z" fill-opacity="0.0273"/>
<path d="M-0.5904 0A0.7334 0.9762 0 1 1 0.8764 0A0.7334 0.9762 0 1 1 -0.5904 0ZM0.3284 -0.9445A1 1 0 0 1 0.3284 0.9445Z" fill-opacity="0.0281"/>
<path d="M-0.5678 0A0.7286 0.9699 0 1 1 0.8895 0A0.7286 0.9699 0 1 1 -0.5678 0ZM0.3692 -0.9293A1 1 0 0 1 0.3692 0.9293Z" fill-opacity="0.0289"/>
<path d="M-0.5446 0A0.7232 0.9627 0 1 1 0.9019 0A0.7232 0.9627 0 1 1 -0.5446 0ZM0.4101 -0.9120A1 1 0 0 1 0.4101 0.9120Z" fill-opacity="0.0297"/>
<path d="M-0.5208 0A0.7172 0.9547 0 1 1 0.9137 0A0.7172 0.9547 0 1 1 -0.5208 0ZM0.4510 -0.8925A1 1 0 0 1 0.4510 0.8925Z" fill-opacity="0.0306"/>
<path d="M-0.4963 0A0.7106 0.9458 0 1 1 0.9248 0A0.7106 0.9458 0 1 1 -0.4963 0ZM0.4919 -0.8707A1 1 0 0 1 0.4919 0.8707Z" fill-opacity="0.0316"/>
<path d="M-0.4712 0A0.7033 0.9362 0 1 1 0.9354 0A0.7033 0.9362 0 1 1 -0.4712 0ZM0.5327 -0.8463A1 1 0 0 1 0.5327 0.8463Z" fill-opacity="0.0326"/>
<path d="M-0.4455 0A0.6953 0.9256 0 1 1 0.9452 0A0.6953 0.9256 0 1 1 -0.4455 0ZM0.5736 -0.8191A1 1 0 0 1 0.5736 0.8191Z" fill-opacity="0.0337"/>
<path d="M-0.4190 0A0.6867 0.9141 0 1 1 0.9544 0A0.6867 0.9141 0 1 1 -0.4190 0ZM0.6145 -0.7889A1 1 0 0 1 0.6145 0.7889Z" fill-opacity="0.0468"/>
<path d="M-0.3919 0A0.6774 0.9016 0 1 1 0.9628 0A0.6774 0.9016 0 1 1 -0.3919 0ZM0.6553 -0.7553A1 1 0 0 1 0.6553 0.7553Z" fill-opacity="0.0493"/>
<path d="M-0.3640 0A0.6673 0.8882 0 1 1 0.9705 0A0.6673 0.8882 0 1 1 -0.3640 0ZM0.6962 -0.7178A1 1 0 0 1 0.6962 0.7178Z" fill-opacity="0.0519"/>
<path d="M-0.3353 0A0.6564 0.8737 0 1 1 0.9775 0A0.6564 0.8737 0 1 1 -0.3353 0ZM0.7371 -0.6758A1 1 0 0 1 0.7371 0.6758Z" fill-opacity="0.0547"/>
<path d="M-0.3058 0A0.6447 0.8581 0 1 1 0.9836 0A0.6447 0.8581 0 1 1 -0.3058 0ZM0.7780 -0.6283A1 1 0 0 1 0.7780 0.6283Z" fill-opacity="0.0579"/>
<path d="M-0.2754 0A0.6321 0.8414 0 1 1 0.9888 0A0.6321 0.8414 0 1 1 -0.2754 0ZM0.8188 -0.5740A1 1 0 0 1 0.8188 0.5740Z" fill-opacity="0.0615"/>
<path d="M-0.2441 0A0.6186 0.8234 0 1 1 0.9931 0A0.6186 0.8234 0 1 1 -0.2441 0ZM0.8597 -0.5108A1 1 0 0 1 0.8597 0.5108Z" fill-opacity="0.0655"/>
<path d="M-0.2119 0A0.6042 0.8042 0 1 1 0.9964 0A0.6042 0.8042 0 1 1 -0.2119 0ZM0.9006 -0.4347A1 1 0 0 1 0.9006 0.4347Z" fill-opacity="0.0701"/>
<path d="M-0.1786 0A0.5886 0.7835 0 1 1 0.9987 0A0.5886 0.7835 0 1 1 -0.1786 0ZM0.9414 -0.3372A1 1 0 0 1 0.9414 0.3372Z" fill-opacity="0.0798"/>
<path d="M-0.1441 0A0.5720 0.7614 0 1 1 0.9999 0A0.5720 0.7614 0 1 1 -0.1441 0ZM0.9823 -0.1873A1 1 0 0 1 0.9823 0.1873Z" fill-opacity="0.0935"/>
<path d="M-0.1084 0A0.5541 0.7375 0 1 1 0.9998 0A0.5541 0.7375 0 1 1 -0.1084 0Z" fill-opacity="0.1031"/>
<path d="M-0.0713 0A0.5348 0.7119 0 1 1 0.9983 0A0.5348 0.7119 0 1 1 -0.0713 0Z" fill-opacity="0.1149"/>
<path d="M-0.0327 0A0.5141 0.6842 0 1 1 0.9954 0A0.5141 0.6842 0 1 1 -0.0327 0Z" fill-opacity="0.1299"/>
<path d="M0.0075 0A0.4916 0.6543 0 1 1 0.9907 0A0.4916 0.6543 0 1 1 0.0075 0Z" fill-opacity="0.1492"/>
<path d="M0.0498 0A0.4671 0.6218 0 1 1 0.9840 0A0.4671 0.6218 0 1 1 0.0498 0Z" fill-opacity="0.1754"/>
<path d="M0.0943 0A0.4404 0.5862 0 1 1 0.9751 0A0.4404 0.5862 0 1 1 0.0943 0Z" fill-opacity="0.1431"/>
<path d="M0.1416 0A0.4109 0.5470 0 1 1 0.9634 0A0.4109 0.5470 0 1 1 0.1416 0Z" fill-opacity="0.1397"/>
<path d="M0.1922 0A0.3781 0.5033 0 1 1 0.9484 0A0.3781 0.5033 0 1 1 0.1922 0Z" fill-opacity="0.1623"/>
<path d="M0.2472 0A0.3409 0.4538 0 1 1 0.9291 0A0.3409 0.4538 0 1 1 0.2472 0Z" fill-opacity="0.1938"/>
<path d="M0.3081 0A0.2978 0.3964 0 1 1 0.9037 0A0.2978 0.3964 0 1 1 0.3081 0Z" fill-opacity="0.2403"/>
<path d="M0.3781 0A0.2456 0.3269 0 1 1 0.8693 0A0.2456 0.3269 0 1 1 0.3781 0Z" fill-opacity="0.1903"/>
<path d="M0.4651 0A0.1765 0.2349 0 1 1 0.8180 0A0.1765 0.2349 0 1 1 0.4651 0Z" fill-opacity="0.1116"/>
<path d="M0.6258 0A0.0336 0.0447 0 1 1 0.6929 0A0.0336 0.0447 0 1 1 0.6258 0Z" fill-opacity="0.1257"/>
</g>
</g><radialGradient id="sCb" gradientUnits="userSpaceOnUse" cx="0" cy="0" r="1"><stop offset="0.000" stop-color="#1c1e1e"/><stop offset="0.500" stop-color="#1a1c1c"/><stop offset="0.800" stop-color="#141515"/><stop offset="0.950" stop-color="#0d0d0d"/><stop offset="1.000" stop-color="#080808"/></radialGradient>
<radialGradient id="sCs" gradientUnits="userSpaceOnUse" cx="0" cy="0" r="1"><stop offset="0.000" stop-color="#46555a" stop-opacity="0.95"/><stop offset="0.200" stop-color="#3e4b4f" stop-opacity="0.8"/><stop offset="0.450" stop-color="#303a3d" stop-opacity="0.45"/><stop offset="0.750" stop-color="#283032" stop-opacity="0.15"/><stop offset="1.000" stop-color="#283032" stop-opacity="0"/></radialGradient>
<circle id="sCp" r="1" fill="url(#sCs)"/>
<g id="sC"><circle r="1" fill="url(#sCb)"/><g fill="#ffffff">
<path d="M-0.7409 0A0.7512 0.9999 0 1 1 0.7614 0A0.7512 0.9999 0 1 1 -0.7409 0ZM0.0236 -0.9997A1 1 0 0 1 0.0236 0.9997Z" fill-opacity="0.0028"/>
<path d="M-0.6952 0A0.7488 0.9967 0 1 1 0.8023 0A0.7488 0.9967 0 1 1 -0.6952 0ZM0.1229 -0.9924A1 1 0 0 1 0.1229 0.9924Z" fill-opacity="0.0028"/>
<path d="M-0.6463 0A0.7431 0.9892 0 1 1 0.8400 0A0.7431 0.9892 0 1 1 -0.6463 0ZM0.2223 -0.9750A1 1 0 0 1 0.2223 0.9750Z" fill-opacity="0.0028"/>
<path d="M-0.5941 0A0.7341 0.9772 0 1 1 0.8742 0A0.7341 0.9772 0 1 1 -0.5941 0ZM0.3216 -0.9469A1 1 0 0 1 0.3216 0.9469Z" fill-opacity="0.0028"/>
<path d="M-0.5383 0A0.7217 0.9606 0 1 1 0.9050 0A0.7217 0.9606 0 1 1 -0.5383 0ZM0.4209 -0.9071A1 1 0 0 1 0.4209 0.9071Z" fill-opacity="0.0028"/>
<path d="M-0.4790 0A0.7056 0.9392 0 1 1 0.9322 0A0.7056 0.9392 0 1 1 -0.4790 0ZM0.5203 -0.8540A1 1 0 0 1 0.5203 0.8540Z" fill-opacity="0.0031"/>
<path d="M-0.4157 0A0.6856 0.9126 0 1 1 0.9555 0A0.6856 0.9126 0 1 1 -0.4157 0ZM0.6196 -0.7849A1 1 0 0 1 0.6196 0.7849Z" fill-opacity="0.0032"/>
<path d="M-0.3481 0A0.6613 0.8803 0 1 1 0.9745 0A0.6613 0.8803 0 1 1 -0.3481 0ZM0.7189 -0.6951A1 1 0 0 1 0.7189 0.6951Z" fill-opacity="0.0032"/>
<path d="M-0.2758 0A0.6323 0.8416 0 1 1 0.9887 0A0.6323 0.8416 0 1 1 -0.2758 0ZM0.8183 -0.5748A1 1 0 0 1 0.8183 0.5748Z" fill-opacity="0.0032"/>
<path d="M-0.1981 0A0.5978 0.7958 0 1 1 0.9975 0A0.5978 0.7958 0 1 1 -0.1981 0ZM0.9176 -0.3975A1 1 0 0 1 0.9176 0.3975Z" fill-opacity="0.0033"/>
<path d="M-0.1139 0A0.5569 0.7413 0 1 1 0.9999 0A0.5569 0.7413 0 1 1 -0.1139 0Z" fill-opacity="0.0046"/>
<path d="M-0.0217 0A0.5080 0.6762 0 1 1 0.9942 0A0.5080 0.6762 0 1 1 -0.0217 0Z" fill-opacity="0.0047"/>
<path d="M0.0811 0A0.4484 0.5969 0 1 1 0.9780 0A0.4484 0.5969 0 1 1 0.0811 0Z" fill-opacity="0.0047"/>
<path d="M0.1996 0A0.3732 0.4968 0 1 1 0.9460 0A0.3732 0.4968 0 1 1 0.1996 0Z" fill-opacity="0.0047"/>
<path d="M0.3466 0A0.2695 0.3587 0 1 1 0.8856 0A0.2695 0.3587 0 1 1 0.3466 0Z" fill-opacity="0.0058"/>
<path d="M0.6258 0A0.0336 0.0447 0 1 1 0.6929 0A0.0336 0.0447 0 1 1 0.6258 0Z" fill-opacity="0.0069"/>
</g>
</g></defs>
<g id="molecule">
<polygon points="430.8,368.7 467.8,359.2 469.0,363.6 432.0,373.1" fill="#3c6e40"/>
<polygon points="430.8,368.7 467.8,359.2 468.8,363.1 431.8,372.6" fill="#72c376"/>
<polygon points="411.8,378.3 432.9,377.0 432.9,379.8" fill="#0c0c0c"/>
<polygon points="398.3,379.2 428.2,361.9 432.9,377.0" fill="#66aa66"/>
<use href="#sH" transform="translate(491.6,354.5) rotate(-52) scale(24.2)"/>
<use href="#sHp" transform="translate(497.25,348.85) scale(7.26)"/>
<use href="#sH" transform="translate(666.9,352.2) rotate(-42) scale(24.6)"/>
<use href="#sHp" transform="translate(675.26,346.56) scale(7.38)"/>
<polygon points="576.0,331.4 603.5,334.6 602.9,345.4" fill="#375c37"/>
<polygon points="576.0,331.4 608.3,329.2 603.5,334.6" fill="#5d9d5d"/>
<polygon points="608.3,329.2 610.7,333.8 604.5,348.2 602.9,345.4 603.5,334.6" fill="#559455"/>
<polygon points="606.6,336.2 642.7,344.4 641.7,349.2 605.6,341.0" fill="#4f9a55"/>
<polygon points="606.6,336.2 642.7,344.4 642.1,347.0 606.0,338.8" fill="#70c474"/>
<polygon points="504.0,361.9 527.5,393.5 518.7,400.1 495.1,368.5" fill="url(#b1)"/>
<polygon points="653.6,358.3 622.0,391.7 630.0,399.3 661.6,365.8" fill="url(#b2)"/>
<polygon points="548.6,389.5 625.9,388.5 626.1,402.5 548.8,403.5" fill="url(#b3)"/>
<use href="#sC" transform="translate(523.1,396.8) rotate(-60) scale(36.6)"/>
<use href="#sCp" transform="translate(530.50,388.69) scale(13.18)"/>
<use href="#sC" transform="translate(626.0,395.5) rotate(-55) scale(37)"/>
<use href="#sCp" transform="translate(634.01,386.28) scale(13.32)"/>
<polygon points="502.6,407.3 456.6,452.0 466.0,461.6 512.0,416.9" fill="url(#b4)"/>
<polygon points="645.7,407.7 683.4,450.3 673.2,459.3 635.6,416.6" fill="url(#b5)"/>
<polygon points="396.7,450.1 461.2,449.6 461.4,464.0 396.8,464.6" fill="url(#b6)"/>
<polygon points="746.4,446.5 678.2,447.4 678.4,462.2 746.6,461.3" fill="url(#b7)"/>
<use href="#sC" transform="translate(461.3,456.8) rotate(-62) scale(39.1)"/>
<use href="#sCp" transform="translate(467.80,448.48) scale(14.08)"/>
<use href="#sC" transform="translate(678.3,454.8) rotate(-45) scale(39.5)"/>
<use href="#sCp" transform="translate(688.19,445.71) scale(14.22)"/>
<use href="#sH" transform="translate(377.8,457.5) rotate(-58) scale(27.1)"/>
<use href="#sHp" transform="translate(382.47,451.18) scale(8.13)"/>
<use href="#sH" transform="translate(766.0,453.7) rotate(-36) scale(27.8)"/>
<use href="#sHp" transform="translate(775.99,446.17) scale(8.34)"/>
<polygon points="480.0,471.7 511.1,519.5 498.5,527.7 467.4,479.9" fill="url(#b8)"/>
<polygon points="657.8,467.5 615.5,517.8 626.9,527.4 669.3,477.2" fill="url(#b9)"/>
<polygon points="533.9,515.3 621.1,514.6 621.3,530.6 534.1,531.3" fill="url(#b10)"/>
<use href="#sC" transform="translate(504.8,523.6) rotate(-58) scale(41.7)"/>
<use href="#sCp" transform="translate(513.50,515.20) scale(15.01)"/>
<use href="#sC" transform="translate(621.2,522.6) rotate(-50) scale(41.8)"/>
<use href="#sCp" transform="translate(630.11,514.38) scale(15.05)"/>
<polygon points="479.5,539.9 445.1,576.3 455.7,586.3 490.1,549.8" fill="url(#b11)"/>
<polygon points="644.7,541.4 672.2,577.3 660.6,586.1 633.2,550.2" fill="url(#b12)"/>
<polygon points="348.7,546.9 377.5,555.2 376.3,566.1" fill="#375c37"/>
<polygon points="348.7,546.9 384.6,547.1 377.5,555.2" fill="#5d9d5d"/>
<polygon points="384.6,547.1 389.4,550.4 389.1,554.3 381.4,570.0 376.3,566.1 377.5,555.2" fill="#559455"/>
<polygon points="382.6,556.1 422.1,568.2 420.3,574.0 380.8,561.9" fill="#4f9a55"/>
<polygon points="382.6,556.1 422.1,568.2 421.1,571.4 381.6,559.3" fill="#70c474"/>
<polygon points="593.4,599.6 636.9,586.9 638.5,592.7 595.0,605.4" fill="#3c6e40"/>
<polygon points="593.4,599.6 636.9,586.9 638.3,592.0 594.8,604.7" fill="#72c376"/>
<polygon points="565.7,614.2 595.8,612.1 595.2,614.0" fill="#0c0c0c"/>
<polygon points="552.5,614.6 589.6,592.0 595.8,612.1" fill="#66aa66"/>
<use href="#sH" transform="translate(450.4,581.3) rotate(-55) scale(31.2)"/>
<use href="#sHp" transform="translate(456.91,575.01) scale(9.36)"/>
<use href="#sH" transform="translate(666.4,581.7) rotate(-50) scale(31.2)"/>
<use href="#sHp" transform="translate(674.26,574.11) scale(9.36)"/>
</g>
<g id="axes">
<line x1="132.7" y1="708.5" x2="131.4" y2="685.5" stroke="#2626ee" stroke-width="1.1"/><polygon points="131,679.3 128.4,685.8 134.2,685.6" fill="#0c0cd8"/>
<line x1="132.7" y1="708.5" x2="114.5" y2="723.8" stroke="#e23a3a" stroke-width="1.1"/><polygon points="109.6,728 112.2,721.2 116.6,726" fill="#e01010"/>
<line x1="132.7" y1="708.5" x2="156" y2="718.6" stroke="#22e022" stroke-width="1.1"/><polygon points="162.2,721.4 154.6,721.6 156.8,716.4" fill="#10d010"/>
<text x="135.10000000000002" y="681.4" font-size="10.5" font-style="italic" font-weight="bold" fill="#2a2a2a">Z</text>
<text x="134.3" y="680.6" font-size="10.5" font-style="italic" font-weight="bold" fill="#ffffff">Z</text>
<text x="118.2" y="721.0" font-size="10.5" font-style="italic" font-weight="bold" fill="#2a2a2a">X</text>
<text x="117.4" y="720.2" font-size="10.5" font-style="italic" font-weight="bold" fill="#ffffff">X</text>
<text x="160.4" y="716.1999999999999" font-size="10.5" font-style="italic" font-weight="bold" fill="#2a2a2a">Y</text>
<text x="159.6" y="715.4" font-size="10.5" font-style="italic" font-weight="bold" fill="#ffffff">Y</text>
</g>
</g>
<rect x="0.5" y="0.5" width="1401" height="831" rx="8" fill="none" stroke="#a2a5ae" stroke-width="1"/>
</svg></body></html>
